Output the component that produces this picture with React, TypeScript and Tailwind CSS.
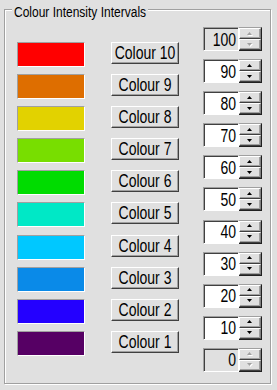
const swatches = [
  { label: "Colour 10", color: "#ff0000" },
  { label: "Colour 9", color: "#de6e00" },
  { label: "Colour 8", color: "#e2d200" },
  { label: "Colour 7", color: "#78de00" },
  { label: "Colour 6", color: "#00dc00" },
  { label: "Colour 5", color: "#00e8c6" },
  { label: "Colour 4", color: "#00c8ff" },
  { label: "Colour 3", color: "#0a8ae8" },
  { label: "Colour 2", color: "#2400ff" },
  { label: "Colour 1", color: "#560064" },
];

const values = [100, 90, 80, 70, 60, 50, 40, 30, 20, 10, 0];

export default function App() {
  return (
    <div className="w-[277px] h-[390px] bg-[#e0e0e0] pl-[4px] pt-[9px] font-['Liberation_Sans',Arial,sans-serif] text-black">
      {/* Group box */}
      <div className="relative flex w-[267px] h-[375px] border border-[#a0a0a0] shadow-[inset_1px_1px_0_#fff,1px_1px_0_#fff] pl-[12px] pt-[17px]">
        <span className="absolute left-[7px] top-[-5px] px-[2px] bg-[#e0e0e0] text-[12px] leading-[14px] whitespace-nowrap">
          <span className="inline-block scale-y-[1.15]">Colour Intensity Intervals</span>
        </span>

        {/* Swatches + buttons */}
        <div className="mt-[15px] flex flex-col gap-[7.1px]">
          {swatches.map((s) => (
            <div key={s.label} className="flex items-start gap-[26px] h-[25px]">
              <div
                className="w-[68px] h-[25px] border border-t-[#a0a0a0] border-l-[#a0a0a0] border-b-white border-r-white"
                style={{ backgroundColor: s.color }}
              />
              <button className="w-[68px] h-[22px] flex items-center justify-center border border-t-white border-l-white border-b-[#404040] border-r-[#404040] shadow-[inset_-1px_-1px_0_#a0a0a0] bg-[#e0e0e0] text-[14px] leading-[14px]">
                <span className="inline-block scale-y-[1.27]">{s.label}</span>
              </button>
            </div>
          ))}
        </div>

        {/* Spin boxes */}
        <div className="ml-[24px] flex flex-col gap-[8.1px]">
          {values.map((v, i) => (
            <SpinBox key={v} value={v} disabled={i === 0 || i === values.length - 1} />
          ))}
        </div>
      </div>
    </div>
  );
}

function SpinBox({ value, disabled }: { value: number; disabled: boolean }) {
  return (
    <div className="flex h-[24px]">
      <div
        className={`w-[36px] h-[24px] flex items-center justify-end pr-[2px] border border-t-[#a0a0a0] border-l-[#a0a0a0] border-b-white border-r-white shadow-[inset_1px_1px_0_#404040] text-[14px] leading-[14px] ${
          disabled ? "bg-[#e0e0e0]" : "bg-white"
        }`}
      >
        <span className="inline-block scale-y-[1.27] pt-[1px]">{value}</span>
      </div>
      <div className="w-[23px] h-[24px] flex flex-col border-t border-r border-b border-t-[#a0a0a0] border-r-[#202020] border-b-[#202020]">
        <SpinHalf dir="up" disabled={disabled} />
        <SpinHalf dir="down" disabled={disabled} />
      </div>
    </div>
  );
}

function SpinHalf({ dir, disabled }: { dir: "up" | "down"; disabled: boolean }) {
  const points = dir === "up" ? "0,3 5,3 2.5,0" : "0,0 5,0 2.5,3";
  return (
    <div className="flex-1 flex items-center justify-center bg-[#e0e0e0] border border-t-white border-l-white border-b-[#404040] border-r-[#808080] shadow-[inset_-1px_-1px_0_#a0a0a0]">
      <svg width="6" height="4" viewBox="0 0 6 4" className="overflow-visible">
        {disabled && <polygon points={points} fill="#ffffff" transform="translate(1,1)" />}
        <polygon points={points} fill={disabled ? "#a0a0a0" : "#000000"} />
      </svg>
    </div>
  );
}
